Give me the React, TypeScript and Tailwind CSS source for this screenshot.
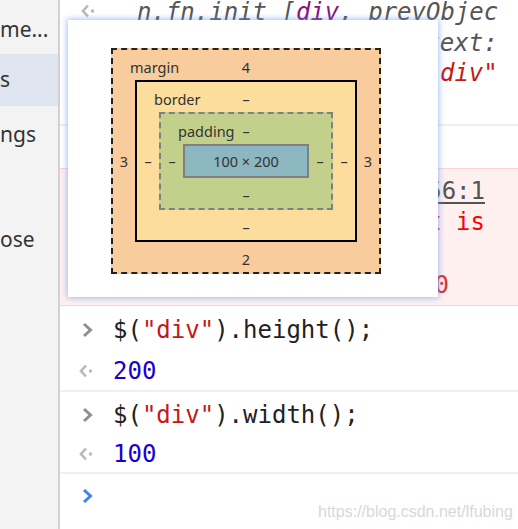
import React from "react";

const mono = "font-['DejaVu_Sans_Mono',monospace]";

function InIcon({ blue = false }: { blue?: boolean }) {
  return (
    <svg width="14" height="18" viewBox="0 0 14 18" className="block">
      <polyline
        points="3,3 9.5,9 3,15"
        fill="none"
        stroke={blue ? "#3f82f0" : "#8e8e8e"}
        strokeWidth="3"
        strokeLinejoin="miter"
      />
    </svg>
  );
}

function OutIcon() {
  return (
    <svg width="16" height="16" viewBox="0 0 16 16" className="block">
      <polyline points="8,2.5 3,8 8,13.5" fill="none" stroke="#b8b8b8" strokeWidth="2.6" />
      <circle cx="12.5" cy="8" r="1.7" fill="#b8b8b8" />
    </svg>
  );
}

type LayerProps = {
  label?: string;
  top: string;
  right: string;
  bottom: string;
  left: string;
  className: string;
  children: React.ReactNode;
};

function Layer({ label, top, right, bottom, left, className, children }: LayerProps) {
  return (
    <div className={`flex flex-col ${className}`}>
      <div className="grid grid-cols-[1fr_auto_1fr] items-center h-[30px] pt-[4px]">
        <span className="pl-[17px] whitespace-nowrap">{label}</span>
        <span>{top}</span>
        <span />
      </div>
      <div className="flex items-center">
        <span className="w-[22px] text-center pt-[1px]">{left}</span>
        {children}
        <span className="w-[22px] text-center pt-[1px]">{right}</span>
      </div>
      <div className="h-[30px] pt-[4px] flex items-center justify-center">{bottom}</div>
    </div>
  );
}

function BoxModel() {
  return (
    <div className="font-['Noto_Sans',sans-serif] text-[14.5px] text-[#333] leading-none">
      <Layer
        label="margin"
        top="4"
        right="3"
        bottom="2"
        left="3"
        className="w-[270px] border-2 border-dashed border-[#222] bg-[#f9cc9d]"
      >
        <Layer
          label="border"
          top="–"
          right="–"
          bottom="–"
          left="–"
          className="flex-1 border-2 border-solid border-black bg-[#fddd9b]"
        >
          <Layer
            label="padding"
            top="–"
            right="–"
            bottom="–"
            left="–"
            className="flex-1 border-2 border-dashed border-[#808080] bg-[#c3d08b]"
          >
            <div className="flex-1 h-[34px] pt-[1px] border-2 border-[#808080] bg-[#8cb6c0] flex items-center justify-center">
              100 × 200
            </div>
          </Layer>
        </Layer>
      </Layer>
    </div>
  );
}

export default function App() {
  return (
    <div className="flex w-[518px] h-[529px] overflow-hidden bg-white">
      {/* sidebar */}
      <div className="w-[60px] shrink-0 bg-[#f3f3f3] border-r-2 border-[#d2d2d2] flex flex-col pt-[6px] font-['Noto_Sans',sans-serif] text-[21px] text-[#333] overflow-hidden">
        <div className="h-[48px] flex items-center whitespace-nowrap">me...</div>
        <div className="h-[52px] flex items-center whitespace-nowrap bg-[#dfe5ef]">s</div>
        <div className="h-[52px] pt-[5px] flex items-center whitespace-nowrap">ngs</div>
        <div className="h-[52px] flex items-center whitespace-nowrap"></div>
        <div className="h-[54px] pt-[5px] flex items-center whitespace-nowrap">ose</div>
      </div>

      {/* console */}
      <div className={`relative flex-1 flex flex-col ${mono} text-[24px]`}>
        {/* object result */}
        <div className="flex -mt-[3px] pb-[35px] border-b-2 border-[#efefef] leading-[30.5px]">
          <div className="w-[77px] shrink-0 pl-[20px] pt-[6px]">
            <OutIcon />
          </div>
          <div className="flex flex-col italic text-[#555] whitespace-nowrap">
            <div>
              n.fn.init [<span className="text-[#881280]">div</span>, prevObjec
            </div>
            <div className="pl-[245px]">context:</div>
            <div className="pl-[144px]">
              selector: <span className="text-[#c41a16]">"div"</span>
            </div>
          </div>
        </div>

        {/* hidden row */}
        <div className="h-[42px]" />

        {/* error */}
        <div className="bg-[#fff0f0] border-y border-[#fdd3d3] pt-[7px] pb-[3px] leading-[31.5px] text-[#ff0000] whitespace-nowrap">
          <div className="flex justify-end pr-[33px]">
            <span className="text-[#545454] underline underline-offset-[3px]">VM56:1</span>
          </div>
          <div className="flex justify-end pr-[33px]">not is</div>
          <div className="flex justify-end pr-[33px]">&nbsp;</div>
          <div className="flex justify-end pr-[69px] text-[#e03030]">(0</div>
        </div>

        {/* height */}
        <div className="flex items-center h-[43px] pt-[6px]">
          <div className="w-[53px] shrink-0 pl-[21px]">
            <InIcon />
          </div>
          <div className="text-[#222]">
            $(<span className="text-[#c41a16]">"div"</span>).height();
          </div>
        </div>
        <div className="flex items-center h-[43px] pt-[4px] border-b-2 border-[#efefef]">
          <div className="w-[53px] shrink-0 pl-[18px]">
            <OutIcon />
          </div>
          <div className="text-[#1c00cf]">200</div>
        </div>

        {/* width */}
        <div className="flex items-center h-[42px] pt-[4px]">
          <div className="w-[53px] shrink-0 pl-[21px]">
            <InIcon />
          </div>
          <div className="text-[#222]">
            $(<span className="text-[#c41a16]">"div"</span>).width();
          </div>
        </div>
        <div className="flex items-center h-[40px] pt-[3px] border-b-2 border-[#efefef]">
          <div className="w-[53px] shrink-0 pl-[18px]">
            <OutIcon />
          </div>
          <div className="text-[#1c00cf]">100</div>
        </div>

        {/* prompt */}
        <div className="flex items-center h-[44px]">
          <div className="w-[53px] shrink-0 pl-[21px]">
            <InIcon blue />
          </div>
        </div>

        {/* popup */}
        <div className="absolute left-[8px] top-[20px] w-[370px] h-[277px] bg-white shadow-[0_0_6px_1px_rgba(100,150,240,0.6)] pl-[43px] pt-[28px]">
          <BoxModel />
        </div>

        {/* watermark */}
        <div className="absolute left-[258px] top-[500px] font-['Liberation_Sans',sans-serif] text-[16px] text-[#d8d8d8] whitespace-nowrap">
          https://blog.csdn.net/lfubing
        </div>
      </div>
    </div>
  );
}
